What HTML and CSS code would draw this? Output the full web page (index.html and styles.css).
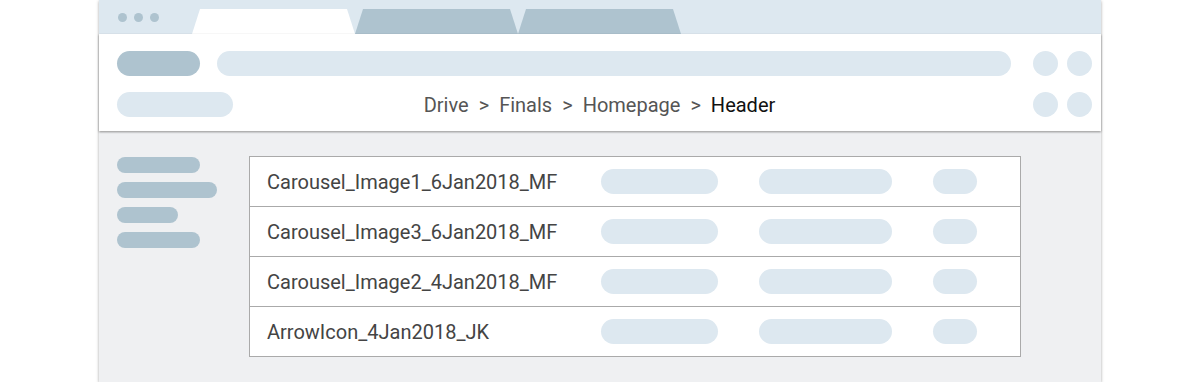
FILE: index.html
```html
<!DOCTYPE html>
<html lang="en">
<head>
  <meta charset="UTF-8" />
  <meta name="viewport" content="width=device-width, initial-scale=1.0"/>
  <title>Drive - Header</title>
  <link rel="stylesheet" href="styles.css">
</head>
<body>
  <div class="janela">
    <div class="barra-abas">
      <div class="pontos">
        <span></span><span></span><span></span>
      </div>
      <div class="abas">
        <div class="aba ativa"></div>
        <div class="aba"></div>
        <div class="aba"></div>
      </div>
    </div>

    <div class="cabecalho">
      <div class="linha-endereco">
        <div class="pilula escura botao-voltar"></div>
        <div class="pilula endereco"></div>
        <div class="circulos">
          <span></span><span></span>
        </div>
      </div>
      <div class="linha-caminho">
        <div class="esquerda">
          <div class="pilula clara filtro"></div>
        </div>
        <nav class="caminho">
          <span>Drive</span>
          <span class="sep">&gt;</span>
          <span>Finals</span>
          <span class="sep">&gt;</span>
          <span>Homepage</span>
          <span class="sep">&gt;</span>
          <span class="atual">Header</span>
        </nav>
        <div class="circulos">
          <span></span><span></span>
        </div>
      </div>
    </div>

    <div class="conteudo">
      <div class="menu-lateral">
        <div class="barra" style="width: 83px"></div>
        <div class="barra" style="width: 100px"></div>
        <div class="barra" style="width: 61px"></div>
        <div class="barra" style="width: 83px"></div>
      </div>

      <div class="tabela" id="arquivos"></div>
    </div>
  </div>

  <script>
    const arquivos = [
      "Carousel_Image1_6Jan2018_MF",
      "Carousel_Image3_6Jan2018_MF",
      "Carousel_Image2_4Jan2018_MF",
      "ArrowIcon_4Jan2018_JK"
    ];

    const tabela = document.getElementById("arquivos");

    arquivos.forEach(nome => {
      const linha = document.createElement("div");
      linha.className = "linha";

      const tdNome = document.createElement("div");
      tdNome.className = "nome";
      tdNome.textContent = nome;
      linha.appendChild(tdNome);

      ["col-a", "col-b", "col-c"].forEach(classe => {
        const pill = document.createElement("div");
        pill.className = "pilula clara " + classe;
        linha.appendChild(pill);
      });

      tabela.appendChild(linha);
    });
  </script>
</body>
</html>
```

FILE: styles.css
```css
body {
  margin: 0;
  background-color: #ffffff;
  font-family: Roboto, "Noto Sans", sans-serif;
}

.janela {
  width: 1002px;
  margin: 0 auto;
  box-shadow: 0 1px 3px rgba(0, 0, 0, 0.35);
}

.barra-abas {
  height: 34px;
  background-color: #dde8f0;
  display: flex;
}

.pontos {
  display: flex;
  gap: 7px;
  padding: 13px 0 0 19px;
}

.pontos span {
  width: 9px;
  height: 9px;
  border-radius: 50%;
  background-color: #aec3cf;
}

.abas {
  display: flex;
  align-self: flex-end;
  margin-left: 33px;
}

.aba {
  width: 163px;
  height: 25px;
  background-color: #aec3cf;
  clip-path: polygon(0 100%, 8px 0, calc(100% - 8px) 0, 100% 100%);
}

.aba.ativa {
  background-color: #ffffff;
}

.cabecalho {
  background-color: #ffffff;
  padding: 17px 9px 14px 18px;
  display: flex;
  flex-direction: column;
  gap: 16px;
  position: relative;
  box-shadow: 0 1px 2px rgba(0, 0, 0, 0.45);
}

.pilula {
  height: 25px;
  border-radius: 13px;
  background-color: #dde8f0;
}

.pilula.escura {
  background-color: #aec3cf;
}

.linha-endereco {
  display: flex;
  align-items: center;
}

.botao-voltar {
  width: 83px;
}

.endereco {
  flex: 1;
  margin: 0 22px 0 17px;
}

.circulos {
  display: flex;
  gap: 9px;
  justify-content: flex-end;
}

.circulos span {
  width: 25px;
  height: 25px;
  border-radius: 50%;
  background-color: #dde8f0;
}

.linha-caminho {
  display: grid;
  grid-template-columns: 1fr auto 1fr;
  align-items: center;
}

.caminho {
  display: flex;
  gap: 10px;
  font-size: 20px;
  color: #555555;
  padding-right: 10px;
}

.caminho .atual {
  color: #111111;
}

.filtro {
  width: 116px;
}

.conteudo {
  background-color: #eff0f2;
  display: flex;
  gap: 32px;
  padding: 24px 0 25px 18px;
  margin-top: 1px;
}

.menu-lateral {
  width: 100px;
  display: flex;
  flex-direction: column;
  gap: 9px;
  padding-top: 1px;
}

.barra {
  height: 16px;
  border-radius: 8px;
  background-color: #aec3cf;
}

.tabela {
  width: 770px;
  border: 1px solid #aaaaaa;
  background-color: #ffffff;
}

.linha {
  height: 49px;
  display: grid;
  grid-template-columns: 293px 117px 133px 44px;
  column-gap: 41px;
  align-items: center;
  padding-left: 17px;
}

.linha + .linha {
  border-top: 1px solid #aaaaaa;
}

.nome {
  font-size: 20px;
  color: #444444;
}
```
